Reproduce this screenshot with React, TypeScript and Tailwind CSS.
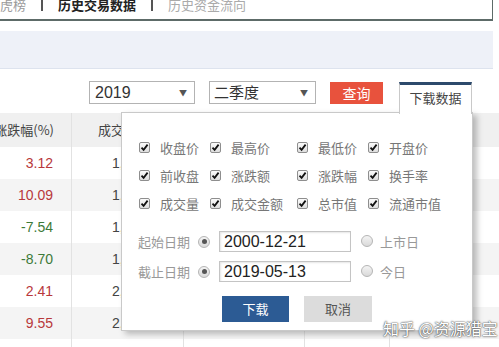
import React from "react";

const cjk = { fontFamily: '"Noto Sans CJK SC", "Noto Sans", sans-serif' };
const arial = { fontFamily: '"Liberation Sans", Arial, sans-serif' };

function Check() {
  return (
    <span className="inline-flex h-[11px] w-[11px] items-center justify-center rounded-[2px] border border-[#8e8e8e] bg-gradient-to-b from-[#fbfbfb] to-[#dedede]">
      <svg width="9" height="9" viewBox="0 0 9 9">
        <path d="M1.5 4.6 L3.6 6.8 L7.6 1.6" fill="none" stroke="#111" strokeWidth="1.8" />
      </svg>
    </span>
  );
}

function Radio({ on }: { on?: boolean }) {
  return (
    <span className="inline-flex h-[12px] w-[12px] items-center justify-center rounded-full border border-[#b5b5b5] bg-gradient-to-b from-[#f4f4f4] to-[#d9d9d9]">
      {on && <span className="h-[5px] w-[5px] rounded-full bg-[#555]" />}
    </span>
  );
}

const checks = [
  ["收盘价", "最高价", "最低价", "开盘价"],
  ["前收盘", "涨跌额", "涨跌幅", "换手率"],
  ["成交量", "成交金额", "总市值", "流通市值"],
];

const rows = [
  { v: "3.12", c: "text-[#b8383b]", s: "1,103,862", bg: "bg-white" },
  { v: "10.09", c: "text-[#b8383b]", s: "1,688,225", bg: "bg-[#f4f4f4]" },
  { v: "-7.54", c: "text-[#3d7a39]", s: "1,540,118", bg: "bg-white" },
  { v: "-8.70", c: "text-[#3d7a39]", s: "1,276,530", bg: "bg-[#f4f4f4]" },
  { v: "2.41", c: "text-[#b8383b]", s: "2,011,947", bg: "bg-white" },
  { v: "9.55", c: "text-[#b8383b]", s: "2,354,771", bg: "bg-[#f4f4f4]" },
];

export default function App() {
  return (
    <div className="relative h-[347px] w-[499px] overflow-hidden bg-white" style={cjk}>
      {/* top tabs */}
      <div className="mr-[6px] h-[21px] border-b-2 border-r border-[#5d6b68] overflow-hidden">
        <div className="-mt-[3px] flex items-center text-[13px] leading-[15px]">
          <span className="text-[#9a9a9a]">虎榜</span>
          <span className="mx-[15px] h-[12px] w-[2px] bg-[#555]" />
          <span className="font-bold text-[#222]">历史交易数据</span>
          <span className="mx-[15px] h-[12px] w-[2px] bg-[#555]" />
          <span className="text-[#aaa]">历史资金流向</span>
        </div>
      </div>
      <div className="h-[10px]" />
      <div className="mr-[6px] h-[38px] border-b border-[#dde3ee] bg-[#eef1f8]" />

      <div className="relative">
        {/* controls */}
        <div className="flex h-[44px] items-start pl-[89px]">
          <div className="mt-[12px] flex h-[23px] w-[106px] items-center justify-between border border-[#b3b3b3] pl-[5px] pr-[7px]">
            <span className="text-[16px] text-[#333]" style={arial}>2019</span>
            <span className="text-[8px] text-[#555]">▼</span>
          </div>
          <div className="ml-[14px] mt-[12px] flex h-[23px] w-[107px] items-center justify-between border border-[#b3b3b3] pl-[4px] pr-[7px]">
            <span className="text-[15px] text-[#333]">二季度</span>
            <span className="text-[8px] text-[#555]">▼</span>
          </div>
          <div className="ml-[14px] mt-[13px] flex h-[22px] w-[53px] items-center justify-center bg-[#e8523d] text-[14px] text-white">
            查询
          </div>
          <div className="relative z-20 ml-[16px] mt-[13px] flex h-[32px] w-[73px] items-start justify-center border-x border-t-[3px] border-[#c9c9c9] border-t-[#2d4a6c] bg-white pt-[3px] text-[13px] text-[#444]">
            下载数据
          </div>
        </div>

        {/* table */}
        <div className="text-[13px]">
          <div className="flex h-[34px] items-center bg-[#f0f0f0] text-[#444]">
            <div className="flex h-full w-[72px] items-center justify-end whitespace-nowrap border-r border-[#e2e2e2] pr-[17px]">
              涨跌幅(%)
            </div>
            <div className="flex h-full w-[112px] items-center whitespace-nowrap border-r border-[#e2e2e2] pl-[26px]">
              成交量(手)
            </div>
            <div className="h-full w-[121px] border-r border-[#e2e2e2]" />
            <div className="h-full w-[85px] border-r border-[#e2e2e2]" />
            <div className="h-full flex-1" />
          </div>
          {rows.map((r, i) => (
            <div key={i} className={`flex h-[32px] items-center ${r.bg}`} style={arial}>
              <div className={`flex h-full w-[72px] items-center justify-end border-r border-[#e2e2e2] pr-[18px] text-[14px] ${r.c}`}>
                {r.v}
              </div>
              <div className="flex h-full w-[112px] items-center border-r border-[#e2e2e2] pl-[40px] text-[14px] text-[#444]">
                {r.s}
              </div>
              <div className="h-full w-[121px] border-r border-[#e2e2e2]" />
              <div className="h-full w-[85px] border-r border-[#e2e2e2]" />
              <div className="h-full flex-1" />
            </div>
          ))}
          <div className="flex h-[20px]">
            <div className="h-full w-[72px] border-r border-[#e2e2e2]" />
            <div className="h-full w-[112px] border-r border-[#e2e2e2]" />
            <div className="h-full w-[121px] border-r border-[#e2e2e2]" />
            <div className="h-full w-[85px] border-r border-[#e2e2e2]" />
          </div>
        </div>

        {/* popup */}
        <div className="absolute left-[121px] top-[43px] z-10 h-[219px] w-[352px] border border-[#c9c9c9] bg-white shadow-[4px_3px_6px_rgba(0,0,0,0.25)]">
          <div className="mt-[25px] flex flex-col gap-[15px] pl-[17px]">
            {checks.map((row, i) => (
              <div key={i} className="grid h-[13px] grid-cols-[71px_87px_71px_80px] items-center text-[13px] text-[#777]">
                {row.map((l) => (
                  <div key={l} className="flex items-center gap-[10px] whitespace-nowrap">
                    <Check />
                    <span>{l}</span>
                  </div>
                ))}
              </div>
            ))}
          </div>

          <div className="mt-[24px] flex flex-col gap-[9px] pl-[16px] text-[13px] text-[#999]">
            {[
              ["起始日期", "2000-12-21", "上市日"],
              ["截止日期", "2019-05-13", "今日"],
            ].map(([a, b, c]) => (
              <div key={a} className="flex h-[21px] items-center">
                <span className="w-[60px] whitespace-nowrap">{a}</span>
                <Radio on />
                <div className="ml-[9px] flex h-[21px] w-[132px] items-center border border-[#c4c4c4] pl-[4px] text-[16px] text-[#222] shadow-[inset_1px_1px_2px_rgba(0,0,0,0.1)]" style={arial}>
                  {b}
                </div>
                <span className="ml-[10px]"><Radio /></span>
                <span className="ml-[7px]">{c}</span>
              </div>
            ))}
          </div>

          <div className="mt-[14px] flex pl-[100px] text-[13px]">
            <div className="flex h-[26px] w-[67px] items-center justify-center bg-[#2c5b94] text-white">下载</div>
            <div className="ml-[15px] flex h-[26px] w-[68px] items-center justify-center bg-[#dcdcdc] text-[#555]">取消</div>
          </div>
        </div>
      </div>

      <div className="absolute left-[383px] top-[316px] z-30 whitespace-nowrap text-[16px] text-white [text-shadow:0_0_2px_#444,0_0_1px_#444]">
        知乎 @资源猎宝
      </div>
    </div>
  );
}
